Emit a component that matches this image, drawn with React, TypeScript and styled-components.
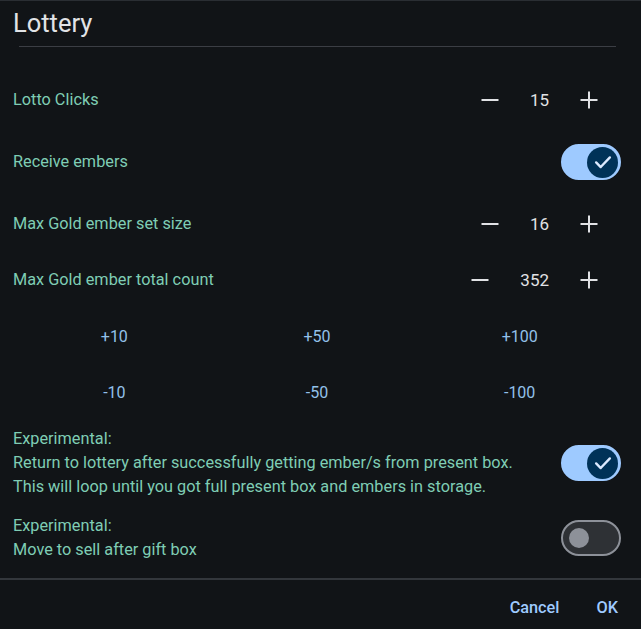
import React, { useState } from "react";
import styled, { createGlobalStyle } from "styled-components";

const Global = createGlobalStyle`
  html, body { margin: 0; padding: 0; background: #111417; }
  body { font-family: Roboto, "Noto Sans", "Liberation Sans", sans-serif; }
  * { box-sizing: border-box; }
`;

const Dialog = styled.div`
  width: 641px;
  height: 629px;
  background: #111417;
  border-top: 1px solid #2a2e33;
  display: flex;
  flex-direction: column;
  overflow: hidden;
`;

const Header = styled.div`
  padding: 6px 0 0 13px;
`;

const Title = styled.h1`
  margin: 0;
  font-size: 25.5px;
  line-height: 32px;
  font-weight: 400;
  color: #e1e3e6;
`;

const TitleRule = styled.div`
  margin: 7px 25px 0 6px;
  height: 1px;
  background: #3b3e44;
`;

const Body = styled.div`
  flex: 1;
  padding: 25px 20px 0 13px;
  display: flex;
  flex-direction: column;
`;

const Row = styled.div<{ $h: number }>`
  height: ${(p) => p.$h}px;
  display: flex;
  align-items: center;
  justify-content: space-between;
`;

const Label = styled.div`
  font-size: 16.3px;
  line-height: 24px;
  color: #7fcdb4;
`;

const Stepper = styled.div`
  display: flex;
  align-items: center;
  padding-right: 8px;
`;

const IconBtn = styled.button`
  width: 48px;
  height: 48px;
  border: none;
  background: transparent;
  padding: 0;
  display: flex;
  align-items: center;
  justify-content: center;
  color: #e1e2e5;
`;

const Value = styled.span`
  margin: 0 16px;
  font-size: 17px;
  color: #e1e2e5;
`;

const Grid = styled.div`
  display: grid;
  grid-template-columns: repeat(3, 1fr);
  grid-auto-rows: 56px;
`;

const StepBtn = styled.button`
  border: none;
  background: transparent;
  font-family: inherit;
  font-size: 16px;
  color: #93c1ea;
  display: flex;
  align-items: center;
  justify-content: center;
`;

const Block = styled.div<{ $mt: number }>`
  margin-top: ${(p) => p.$mt}px;
  display: flex;
  align-items: center;
  justify-content: space-between;
`;

const Track = styled.div<{ $on: boolean }>`
  width: 60px;
  height: 36px;
  border-radius: 18px;
  flex-shrink: 0;
  display: flex;
  align-items: center;
  padding: 0 1px;
  justify-content: ${(p) => (p.$on ? "flex-end" : "flex-start")};
  background: ${(p) => (p.$on ? "#9ecaff" : "#2e3135")};
  border: 2px solid ${(p) => (p.$on ? "#9ecaff" : "#8d9199")};
`;

const Thumb = styled.div<{ $on: boolean }>`
  width: ${(p) => (p.$on ? 31 : 20)}px;
  height: ${(p) => (p.$on ? 31 : 20)}px;
  margin-left: ${(p) => (p.$on ? 0 : 5)}px;
  border-radius: 50%;
  background: ${(p) => (p.$on ? "#003258" : "#8d9199")};
  display: flex;
  align-items: center;
  justify-content: center;
`;

const Footer = styled.div`
  border-top: 2px solid #33373c;
  height: 51px;
  display: flex;
  align-items: center;
  justify-content: flex-end;
  gap: 37px;
  padding: 6px 23px 0 0;
`;

const TextBtn = styled.button`
  border: none;
  background: transparent;
  padding: 0;
  font-family: inherit;
  font-size: 16.3px;
  font-weight: 500;
  color: #9ecaff;
`;

const Minus = () => (
  <svg width="18" height="18" viewBox="0 0 18 18">
    <line x1="0.5" y1="9" x2="17.5" y2="9" stroke="currentColor" strokeWidth="2" />
  </svg>
);

const Plus = () => (
  <svg width="18" height="18" viewBox="0 0 18 18">
    <line x1="0.5" y1="9" x2="17.5" y2="9" stroke="currentColor" strokeWidth="2" />
    <line x1="9" y1="0.5" x2="9" y2="17.5" stroke="currentColor" strokeWidth="2" />
  </svg>
);

const Check = () => (
  <svg width="22" height="22" viewBox="0 0 24 24">
    <path d="M4.5 12.5l5 5L19.5 7" fill="none" stroke="#dbe9ff" strokeWidth="2.6" strokeLinecap="round" strokeLinejoin="round" />
  </svg>
);

const Switch = ({ on, onClick }: { on: boolean; onClick: () => void }) => (
  <Track $on={on} onClick={onClick}>
    <Thumb $on={on}>{on && <Check />}</Thumb>
  </Track>
);

const NumStepper = ({ value, setValue }: { value: number; setValue: (n: number) => void }) => (
  <Stepper>
    <IconBtn onClick={() => setValue(value - 1)}>
      <Minus />
    </IconBtn>
    <Value>{value}</Value>
    <IconBtn onClick={() => setValue(value + 1)}>
      <Plus />
    </IconBtn>
  </Stepper>
);

export default function App() {
  const [clicks, setClicks] = useState(15);
  const [receive, setReceive] = useState(true);
  const [setSize, setSetSize] = useState(16);
  const [total, setTotal] = useState(352);
  const [ret, setRet] = useState(true);
  const [sell, setSell] = useState(false);

  return (
    <>
      <Global />
      <Dialog>
        <Header>
          <Title>Lottery</Title>
          <TitleRule />
        </Header>
        <Body>
          <Row $h={56}>
            <Label>Lotto Clicks</Label>
            <NumStepper value={clicks} setValue={setClicks} />
          </Row>
          <Row $h={68}>
            <Label>Receive embers</Label>
            <Switch on={receive} onClick={() => setReceive(!receive)} />
          </Row>
          <Row $h={56}>
            <Label>Max Gold ember set size</Label>
            <NumStepper value={setSize} setValue={setSetSize} />
          </Row>
          <Row $h={56}>
            <Label>Max Gold ember total count</Label>
            <NumStepper value={total} setValue={setTotal} />
          </Row>
          <Grid>
            {[10, 50, 100].map((n) => (
              <StepBtn key={"p" + n} onClick={() => setTotal(total + n)}>+{n}</StepBtn>
            ))}
            {[10, 50, 100].map((n) => (
              <StepBtn key={"m" + n} onClick={() => setTotal(total - n)}>-{n}</StepBtn>
            ))}
          </Grid>
          <Block $mt={7}>
            <Label>
              Experimental:
              <br />
              Return to lottery after successfully getting ember/s from present box.
              <br />
              This will loop until you got full present box and embers in storage.
            </Label>
            <Switch on={ret} onClick={() => setRet(!ret)} />
          </Block>
          <Block $mt={15}>
            <Label>
              Experimental:
              <br />
              Move to sell after gift box
            </Label>
            <Switch on={sell} onClick={() => setSell(!sell)} />
          </Block>
        </Body>
        <Footer>
          <TextBtn>Cancel</TextBtn>
          <TextBtn>OK</TextBtn>
        </Footer>
      </Dialog>
    </>
  );
}
